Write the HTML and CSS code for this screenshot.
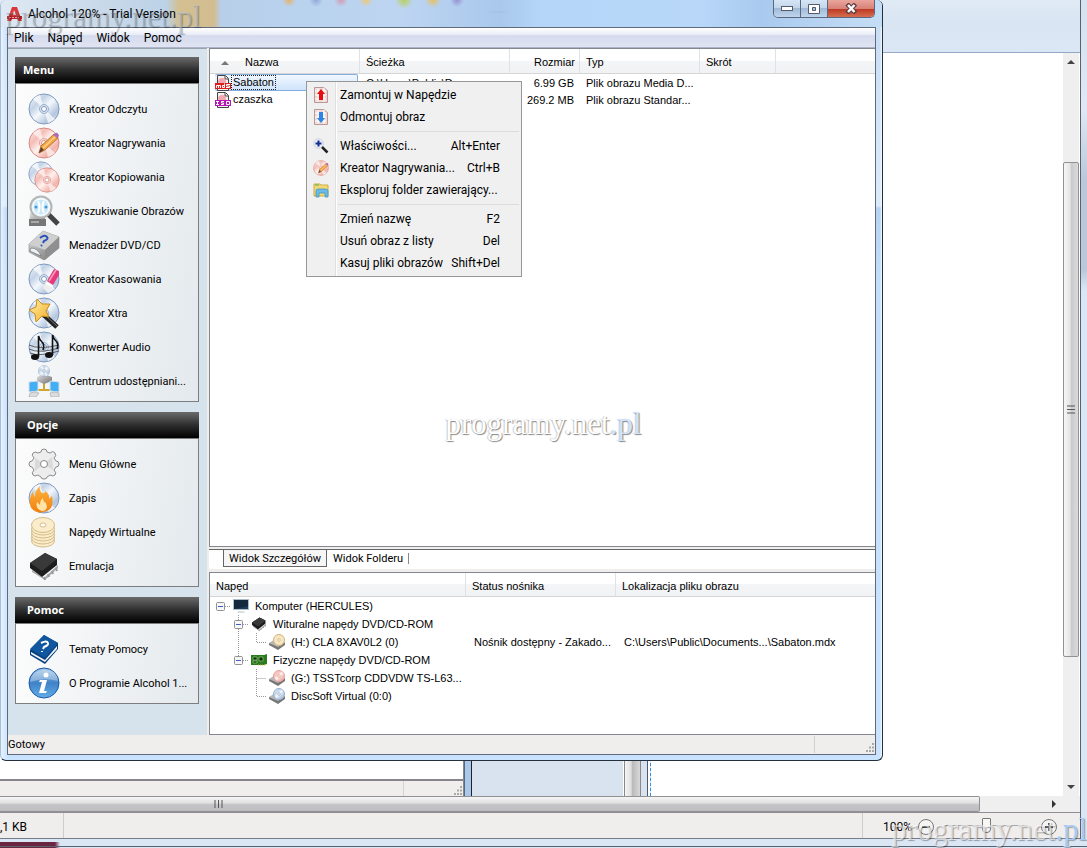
FILE: index.html
```html
<!DOCTYPE html>
<html lang="pl">
<head>
<meta charset="utf-8">
<title>Alcohol 120% - Trial Version</title>
<link rel="stylesheet" href="styles.css">
</head>
<body>
<svg class="defs" aria-hidden="true">
  <defs>
    <linearGradient id="gBlue" x1="0" y1="0" x2="1" y2="1"><stop offset="0" stop-color="#fff"/><stop offset=".3" stop-color="#c3d3e6"/><stop offset=".5" stop-color="#f4f8fc"/><stop offset=".75" stop-color="#b4c7df"/><stop offset="1" stop-color="#eef3f9"/></linearGradient>
    <linearGradient id="gRed" x1="0" y1="0" x2="1" y2="1"><stop offset="0" stop-color="#fff0ee"/><stop offset=".3" stop-color="#f4bdb6"/><stop offset=".5" stop-color="#fff3f1"/><stop offset=".75" stop-color="#f3b3aa"/><stop offset="1" stop-color="#fdeae7"/></linearGradient>
    <linearGradient id="gGrey" x1="0" y1="0" x2="1" y2="1"><stop offset="0" stop-color="#e8e8e8"/><stop offset=".5" stop-color="#a9a9a9"/><stop offset="1" stop-color="#6f6f6f"/></linearGradient>
    <linearGradient id="gFire" x1="0" y1="0" x2="0" y2="1"><stop offset="0" stop-color="#ffb43a"/><stop offset="1" stop-color="#f08010"/></linearGradient>
    <linearGradient id="gStar" x1="0" y1="0" x2="1" y2="1"><stop offset="0" stop-color="#fff2a8"/><stop offset="1" stop-color="#f2ac28"/></linearGradient>
    <linearGradient id="gInfo" x1="0" y1="0" x2="0" y2="1"><stop offset="0" stop-color="#a9c9ea"/><stop offset=".5" stop-color="#3f82c6"/><stop offset="1" stop-color="#62aeea"/></linearGradient>
    <symbol id="disc" viewBox="0 0 32 32"><circle cx="16" cy="16" r="15" fill="url(#gBlue)" stroke="#7f98bd"/><path d="M16 16 5 6a15 15 0 0 1 7-4zM16 16l11 10a15 15 0 0 1-7 4z" fill="#fff" opacity=".7"/><circle cx="16" cy="16" r="4.500" fill="#dce6f2" stroke="#9aafcc"/><circle cx="16" cy="16" r="2.500" fill="#fff" stroke="#7f98bd"/></symbol>
    <symbol id="disc-red" viewBox="0 0 32 32"><circle cx="16" cy="16" r="15" fill="url(#gRed)" stroke="#d88a84"/><path d="M16 16 5 6a15 15 0 0 1 7-4zM16 16l11 10a15 15 0 0 1-7 4z" fill="#fff" opacity=".6"/><circle cx="16" cy="16" r="4.500" fill="#fbe2df" stroke="#e0a09a"/><circle cx="16" cy="16" r="2.500" fill="#fff" stroke="#d88a84"/></symbol>
    <symbol id="burn" viewBox="0 0 32 32"><use href="#disc-red"/><path d="m11 26 2-7L26 7l4 4-13 12z" fill="#f3a445" stroke="#a8651c" stroke-width=".8"/><path d="m15 21 13-12" stroke="#ffd38c" stroke-width="1.500"/><path d="m25 8 2-2q3-1 4 3l-2 2z" fill="#b36bb0"/><path d="m11 26 2-6 3 3z" fill="#5b4032"/></symbol>
    <symbol id="copy" viewBox="0 0 32 32"><use href="#disc" x="0" y="0" width="26" height="26"/><use href="#disc-red" x="6" y="6" width="26" height="26"/></symbol>
    <symbol id="search" viewBox="0 0 32 32"><path d="m2 18 14-1 2 14H1z" fill="url(#gGrey)"/><path d="M1 24h17v7H1z" fill="#777"/><path d="M3 27h8" stroke="#ddd"/><path d="m20 19 10 10" stroke="#444" stroke-width="5"/><circle cx="13" cy="12" r="10.500" fill="#e7f5fd" stroke="#b5b5b5" stroke-width="2"/><circle cx="13" cy="12" r="8" fill="#c7e7fa" stroke="#fff"/><path d="M10 6q3 6 0 12M16 6q-3 6 0 12" fill="none" stroke="#fff" stroke-width="2"/><circle cx="8" cy="12" r="1.500" fill="#4597d4"/><circle cx="18" cy="12" r="1.500" fill="#4597d4"/></symbol>
    <symbol id="drive" viewBox="0 0 32 32"><path d="M1 15 15 2l16 6v11L16 31 1 23z" fill="url(#gGrey)" stroke="#888" stroke-width=".6"/><path d="M1 15 15 2l16 6-14 13z" fill="#cfcfcf"/><path d="M17 21v10l14-12V8z" fill="#8f8f8f"/><path d="M3 19q7 0 10 8L2 22z" fill="#eef2f8" stroke="#666" stroke-width=".6"/><path d="M12 9q5-4 7-1 2 2-3 4l-1 2m-1 2-1 1" fill="none" stroke="#2752b8" stroke-width="2"/></symbol>
    <symbol id="erase" viewBox="0 0 32 32"><use href="#disc"/><path d="m15 25 4-8 7 4-6 9z" fill="#eee"/><path d="m19 18 7-12 5 2v4l-6 10z" fill="#e5397a"/><path d="m21 18 7-11" stroke="#f9a0c0" stroke-width="1.500"/><path d="m18 20 7 4" stroke="#fff" stroke-width="2"/></symbol>
    <symbol id="wand" viewBox="0 0 32 32"><use href="#disc"/><path d="m16 18 13 12" stroke="#222" stroke-width="5"/><path d="m17 18 12 11" stroke="#777"/><path d="m9 2 5 5h8l-4 7 3 6-7-1-6 6-1-8-6-4 7-3z" fill="url(#gStar)" stroke="#c78c1a"/></symbol>
    <symbol id="music" viewBox="0 0 32 32"><use href="#disc"/><path d="M1 14q10 5 30 0M1 18q10 5 30-1M2 22q10 4 29-2" fill="none" stroke="#444" stroke-width=".8"/><ellipse cx="7" cy="26" rx="4" ry="3" fill="#111"/><ellipse cx="21" cy="24" rx="4" ry="3" fill="#111"/><path d="M10.500 26V5q1 4 3.500 6 3 3 1 8M24.500 24V4q1 4 3.500 6 3 3 1 8" fill="none" stroke="#111" stroke-width="1.600"/></symbol>
    <symbol id="network" viewBox="0 0 32 32"><path d="M16 17v8H8m8 0h8" stroke="#d0a630" stroke-width="2" fill="none"/><path d="m9 12 7-3 8 3v4l-8 3-7-3z" fill="url(#gGrey)"/><use href="#disc" x="10" y="0" width="12" height="12"/><path d="m1 17 9-1v10l-9 1zM22 16l9 1v10l-9-1z" fill="#42aef4" stroke="#d7dfe8"/><path d="M2 28q5-2 9 0l-3 4H1zM22 28q5-2 9 0v4h-8z" fill="#dcdcdc" stroke="#999" stroke-width=".5"/></symbol>
    <symbol id="gear" viewBox="0 0 32 32"><path d="M13 4q0-3 3-3t3 3l3 1q3-3 5 0t-1 5l2 3q3 0 3 3t-3 3l-2 3q3 3 1 5t-5 0l-3 2q0 2-3 2t-3-2l-3-2q-3 2-5 0t1-5l-2-3q-3 0-3-3t3-3l2-3Q3 7 5 5t5 0z" fill="#ededed" stroke="#8b8b8b"/><path d="m7 10 9 6-9 7zM24 9l-8 7 9 6z" fill="#d9d9d9"/><circle cx="16" cy="16" r="3.500" fill="#fff" stroke="#888"/></symbol>
    <symbol id="fire" viewBox="0 0 32 32"><use href="#disc"/><path d="M13 31Q0 29 2 17q1-5 3-8 0 4 2 6 0-7 5-11-1 5 2 7 3 2 3-2 5 3 4 8l3-3q3 16-11 16z" fill="url(#gFire)"/><path d="M14 29q-7-2-5-9l3 3q0-5 3-7 0 4 3 5l1 4q-1 4-5 4z" fill="#ffe4a8"/></symbol>
    <symbol id="stack" viewBox="0 0 32 32"><g fill="#fbedcb" stroke="#c9ad74" stroke-width=".8"><ellipse cx="15" cy="25" rx="11.500" ry="6"/><ellipse cx="15" cy="22" rx="11.500" ry="6"/><ellipse cx="15" cy="19" rx="11.500" ry="6"/><ellipse cx="15" cy="16" rx="11.500" ry="6"/><ellipse cx="15" cy="13" rx="11.500" ry="6"/><ellipse cx="15" cy="9" rx="11.500" ry="7.500"/><ellipse cx="15" cy="9" rx="3" ry="2" fill="#fff"/></g></symbol>
    <symbol id="chip" viewBox="0 0 32 32"><path d="m4 20 12 8 14-13v3L17 30 4 22z" fill="#aaa"/><path d="m2 13 15-10 12 6v6L14 27 2 18z" fill="#1d1d1d"/><path d="m2 13 15-10 12 6-15 12z" fill="#393939"/><path d="m16 27 1 3m3-6 1 3m3-6 1 3m3-6 1 3" stroke="#999" stroke-width="2"/></symbol>
    <symbol id="book" viewBox="0 0 32 32"><path d="m2 17 14-15 14 8v6L17 31 2 22z" fill="#063f7d"/><path d="m3 19 14 8 12-14v3L17 29 3 21z" fill="#eef1f5"/><path d="m2 16L16 2l14 8-13 15z" fill="#11579f"/><path d="M13 10q6-3 7 0 1 2-4 4l-1 2m-1 2v1" fill="none" stroke="#fff" stroke-width="2"/></symbol>
    <symbol id="info" viewBox="0 0 32 32"><circle cx="16" cy="16" r="15" fill="url(#gInfo)" stroke="#1b58a6"/><path d="M2 15Q3 4 16 3t14 11q-14-4-28 1z" fill="#fff" opacity=".3"/><circle cx="18" cy="8" r="2.500" fill="#fff"/><path d="M12 13h7l-3 11h3l-1 2h-7l3-11h-3z" fill="#fff"/></symbol>
    <symbol id="app" viewBox="0 0 16 16"><path d="m5 1h5l5 14h-4l-1-3H6l-2 3H0z" fill="#d8383c"/><path d="m7 4 2 5H6z" fill="#fff"/><path d="M0 10h15v3H0z" fill="#b9222a"/><path d="M2 11.500h10" stroke="#f3a0a0" stroke-dasharray="2 1"/></symbol>
    <symbol id="page" viewBox="0 0 16 16"><path d="M2.500.5h8l3 3v12h-11z" fill="#f5f1f1" stroke="#444"/><path d="M10 1v3h3" fill="none" stroke="#444"/><circle cx="7" cy="7" r="4" fill="#f2a8b0"/></symbol>
    <symbol id="mds" viewBox="0 0 16 16"><use href="#page"/><path d="M0 8h16v6H0z" fill="#df1e1e"/><path d="M1.500 13v-2.500h4V13M3.500 11v2M9.500 8.500v4h-2v-2h2M15 9.500h-3.500v1.500h3v1.500H11" fill="none" stroke="#fff"/></symbol>
    <symbol id="iso" viewBox="0 0 16 16"><use href="#page"/><path d="M0 8h16v6H0z" fill="#b615b8"/><path d="M1 9.500h3M2.500 10v3M1 12.500h3M9 9.500H6.500v1.500h2v1.500H6M11.500 9.500h3v3h-3z" fill="none" stroke="#fff"/></symbol>
    <symbol id="mount" viewBox="0 0 16 16"><path d="M1.500.5h9l4 3v12h-13z" fill="#f1d8d5" stroke="#b79a98"/><path d="M2 4h11M2 8h11M2 12h11M5 1v14M11 1v14" stroke="#fff"/><path d="m8 2 4 5h-2v6H6V7H4z" fill="#e60e0e"/></symbol>
    <symbol id="unmount" viewBox="0 0 16 16"><path d="M1.500.5h9l4 3v12h-13z" fill="#f1d8d5" stroke="#b79a98"/><path d="M2 4h11M2 8h11M2 12h11M5 1v14M11 1v14" stroke="#fff"/><path d="m8 14 4-5h-2V3H6v6H4z" fill="#2b84e6"/></symbol>
    <symbol id="zoomin" viewBox="0 0 16 16"><circle cx="5.500" cy="5.500" r="4.800" fill="#e8eefa" stroke="#cdd2da"/><path d="M5.500 2.500v6m-3-3h6" stroke="#15318c" stroke-width="2"/><path d="m9 9 5.500 5.500" stroke="#222" stroke-width="2.500"/></symbol>
    <symbol id="folder" viewBox="0 0 16 16"><path d="M1 2h6l1 1h7v11H1z" fill="#f2d875" stroke="#d0ae45"/><path d="M2 3h4" stroke="#55b45a"/><path d="M3 15V9q0-2 2-2h7q3 0 3 2v6h-3v-4H6v4z" fill="#69bce9" stroke="#368fbe" stroke-width=".7"/></symbol>
    <symbol id="monitor" viewBox="0 0 16 16"><path d="M0 1h16v11H0z" fill="#aebdc8"/><path d="M1 2h14v9H1z" fill="#11283d"/><path d="m1 11 14-3v3z" fill="#1d3c56"/><path d="M5 13h6l1 2H4z" fill="#d8e0e5"/></symbol>
    <symbol id="card" viewBox="0 0 16 16"><path d="M0 3h13l3-1v10l-3 1H0z" fill="#2c7b21"/><path d="M2 5h4v3H2zM2 9h4v2H2zM8 5h4v4H8z" fill="#122c12" stroke="#8fd06f" stroke-width=".7"/><path d="M7 13h8" stroke="#d6b740" stroke-dasharray="1 1"/></symbol>
    <symbol id="odd-gold" viewBox="0 0 16 16"><path d="m0 9 8-5 8 5-7 6z" fill="#b7b7b7"/><path d="m0 9 9 4v3l-9-5zM9 13l7-5v3l-7 5z" fill="#777"/><circle cx="10" cy="6" r="5.500" fill="#f7e6c2" stroke="#d0b47c"/><circle cx="10" cy="6" r="1.300" fill="#fff" stroke="#c4a262" stroke-width=".6"/></symbol>
    <symbol id="odd-red" viewBox="0 0 16 16"><path d="m0 9 8-5 8 5-7 6z" fill="#b7b7b7"/><path d="m0 9 9 4v3l-9-5zM9 13l7-5v3l-7 5z" fill="#777"/><circle cx="10" cy="6" r="5.500" fill="url(#gRed)" stroke="#e4a29a"/><circle cx="10" cy="6" r="1.300" fill="#fff" stroke="#d4857c" stroke-width=".6"/></symbol>
    <symbol id="odd-blue" viewBox="0 0 16 16"><path d="m0 9 8-5 8 5-7 6z" fill="#b7b7b7"/><path d="m0 9 9 4v3l-9-5zM9 13l7-5v3l-7 5z" fill="#777"/><circle cx="10" cy="6" r="5.500" fill="url(#gBlue)" stroke="#93afd2"/><circle cx="10" cy="6" r="1.300" fill="#fff" stroke="#7f98bd" stroke-width=".6"/></symbol>
    <symbol id="box" viewBox="0 0 9 9"><rect x=".5" y=".5" width="8" height="8" rx="1" fill="#f7f7f7" stroke="#919191"/><path d="M2 4.500h5" stroke="#3b5fc4"/></symbol>
  </defs>
</svg>

<div class="desktop">
  <div class="back">
    <div class="ribbon"></div>
    <div class="workspace">
      <div class="canvas">
        <div class="doc"><div class="doc-page"></div><div class="doc-status"><span></span><svg class="grip" viewBox="0 0 10 10"><use href="#gripdots"/></svg></div></div>
        <div class="doc-frame"></div>
        <div class="doc-pane"></div>
        <div class="doc-scroll"></div>
        <div class="doc-edge"></div>
      </div>
      <div class="vscroll">
        <button class="arrow" aria-label="W górę"><svg width="8" height="5"><path d="M0 5 4 1l4 4z" fill="#444"/></svg></button>
        <div class="vthumb"><svg width="8" height="9"><path d="M0 1h8M0 4.500h8M0 8h8" stroke="#555"/></svg></div>
        <button class="arrow" aria-label="W dół"><svg width="8" height="5"><path d="m0 0 4 4 4-4z" fill="#444"/></svg></button>
      </div>
    </div>
    <div class="hscroll">
      <div class="hthumb"><svg width="9" height="8"><path d="M1 0v8M4.500 0v8M8 0v8" stroke="#555"/></svg></div>
      <button class="arrow end" aria-label="W prawo"><svg width="5" height="8"><path d="m0 0 4 4-4 4z" fill="#333"/></svg></button>
    </div>
    <div class="backstatus">
      <div class="size">,1 KB</div>
      <div class="mid"></div>
      <label class="pct" for="zoom">100%</label>
      <button class="round" aria-label="Pomniejsz"><svg width="16" height="16"><circle cx="8" cy="8" r="7.500" fill="#f4f4f4" stroke="#777"/><path d="M4 8h8" stroke="#555" stroke-width="2"/></svg></button>
      <input id="zoom" class="slider" type="range" min="0" max="100" value="50">
      <button class="round" aria-label="Powiększ"><svg width="16" height="16"><circle cx="8" cy="8" r="7.500" fill="#f4f4f4" stroke="#777"/><path d="M4 8h8M8 4v8" stroke="#555" stroke-width="2"/></svg></button>
    </div>
  </div>

  <main class="window">
    <header class="titlebar">
      <svg class="i16"><use href="#app"/></svg>
      <h1>Alcohol 120% - Trial Version</h1>
      <div class="winbtns">
        <button aria-label="Minimalizuj"><svg width="13" height="6"><rect x=".5" y=".5" width="11" height="4" fill="#fff" stroke="#545b6b"/></svg></button>
        <button aria-label="Przywróć"><svg width="13" height="10"><path d="M.5.500h11v9H.5z" fill="#fff" stroke="#545b6b"/><path d="M4.500 3.500h3v3h-3z" fill="#a9c3df" stroke="#545b6b"/></svg></button>
        <button class="close" aria-label="Zamknij"><svg width="13" height="11"><path d="m2 1 8.500 9M10.500 1 2 10" stroke="#5b3b40" stroke-width="4.500"/><path d="m3 2 6.500 7M9.500 2 3 9" stroke="#fff" stroke-width="2.500"/></svg></button>
      </div>
    </header>
    <div class="client">
      <nav class="menubar"><button>Plik</button><button>Napęd</button><button>Widok</button><button>Pomoc</button></nav>
      <div class="content">
        <aside class="sidebar">
          <section class="panel">
            <h2 class="first">Menu</h2>
            <div class="panel-body">
              <button><svg class="i32"><use href="#disc"/></svg>Kreator Odczytu</button>
              <button><svg class="i32"><use href="#burn"/></svg>Kreator Nagrywania</button>
              <button><svg class="i32"><use href="#copy"/></svg>Kreator Kopiowania</button>
              <button><svg class="i32"><use href="#search"/></svg>Wyszukiwanie Obrazów</button>
              <button><svg class="i32"><use href="#drive"/></svg>Menadżer DVD/CD</button>
              <button><svg class="i32"><use href="#erase"/></svg>Kreator Kasowania</button>
              <button><svg class="i32"><use href="#wand"/></svg>Kreator Xtra</button>
              <button><svg class="i32"><use href="#music"/></svg>Konwerter Audio</button>
              <button><svg class="i32"><use href="#network"/></svg>Centrum udostępniani...</button>
            </div>
          </section>
          <section class="panel">
            <h2>Opcje</h2>
            <div class="panel-body">
              <button><svg class="i32"><use href="#gear"/></svg>Menu Główne</button>
              <button><svg class="i32"><use href="#fire"/></svg>Zapis</button>
              <button><svg class="i32"><use href="#stack"/></svg>Napędy Wirtualne</button>
              <button><svg class="i32"><use href="#chip"/></svg>Emulacja</button>
            </div>
          </section>
          <section class="panel">
            <h2>Pomoc</h2>
            <div class="panel-body">
              <button><svg class="i32"><use href="#book"/></svg>Tematy Pomocy</button>
              <button><svg class="i32"><use href="#info"/></svg>O Programie Alcohol 1...</button>
            </div>
          </section>
        </aside>
        <div class="panes">
          <div class="pane list-pane">
            <table class="grid files">
              <colgroup><col class="w150"><col class="w150"><col class="w70"><col class="w120"><col class="w76"><col></colgroup>
              <thead><tr><th><span class="sorted"><svg width="8" height="5"><path d="M0 5 4 1l4 4z" fill="#777"/></svg>Nazwa</span></th><th>Ścieżka</th><th class="num">Rozmiar</th><th>Typ</th><th>Skrót</th><th></th></tr></thead>
              <tbody>
                <tr><td class="namecell"><div class="name sel"><svg class="i16"><use href="#mds"/></svg><span>Sabaton</span></div></td><td>C:\Users\Public\D...</td><td class="num">6.99 GB</td><td>Plik obrazu Media D...</td><td></td><td></td></tr>
                <tr><td class="namecell"><div class="name"><svg class="i16"><use href="#iso"/></svg><span>czaszka</span></div></td><td></td><td class="num">269.2 MB</td><td>Plik obrazu Standar...</td><td></td><td></td></tr>
              </tbody>
            </table>
            <div class="ctx">
              <button><svg class="i16"><use href="#mount"/></svg>Zamontuj w Napędzie</button>
              <button><svg class="i16"><use href="#unmount"/></svg>Odmontuj obraz</button>
              <hr>
              <button><svg class="i16"><use href="#zoomin"/></svg>Właściwości...<kbd>Alt+Enter</kbd></button>
              <button><svg class="i16"><use href="#burn"/></svg>Kreator Nagrywania...<kbd>Ctrl+B</kbd></button>
              <button><svg class="i16"><use href="#folder"/></svg>Eksploruj folder zawierający...</button>
              <hr>
              <button><span class="i16"></span>Zmień nazwę<kbd>F2</kbd></button>
              <button><span class="i16"></span>Usuń obraz z listy<kbd>Del</kbd></button>
              <button><span class="i16"></span>Kasuj pliki obrazów<kbd>Shift+Del</kbd></button>
            </div>
          </div>
          <div class="tabs"><button class="active">Widok Szczegółów</button><button>Widok Folderu</button></div>
          <div class="pane tree-pane">
            <table class="grid tree">
              <colgroup><col class="w256"><col class="w150"><col></colgroup>
              <thead><tr><th>Napęd</th><th>Status nośnika</th><th>Lokalizacja pliku obrazu</th></tr></thead>
              <tbody>
                <tr><td><div class="node"><svg width="18" height="18"><path class="dots" d="M13 9.500h5"/><use href="#box" x="4" y="5" width="9" height="9"/></svg><svg class="i16"><use href="#monitor"/></svg>Komputer (HERCULES)</div></td><td></td><td></td></tr>
                <tr><td><div class="node"><svg width="36" height="18"><path class="dots" d="M26.500 0v18M31 9.500h5"/><use href="#box" x="22" y="5" width="9" height="9"/></svg><svg class="i16"><use href="#chip"/></svg>Wituralne napędy DVD/CD-ROM</div></td><td></td><td></td></tr>
                <tr><td><div class="node"><svg width="54" height="18"><path class="dots" d="M26.500 0v18M44.500 0v9.500H54"/></svg><svg class="i16"><use href="#odd-gold"/></svg>(H:) CLA 8XAV0L2 (0)</div></td><td>Nośnik dostępny - Zakado...</td><td>C:\Users\Public\Documents...\Sabaton.mdx</td></tr>
                <tr><td><div class="node"><svg width="36" height="18"><path class="dots" d="M26.500 0v9M31 9.500h5"/><use href="#box" x="22" y="5" width="9" height="9"/></svg><svg class="i16"><use href="#card"/></svg>Fizyczne napędy DVD/CD-ROM</div></td><td></td><td></td></tr>
                <tr><td><div class="node"><svg width="54" height="18"><path class="dots" d="M44.500 0v18M44.500 9.500H54"/></svg><svg class="i16"><use href="#odd-red"/></svg>(G:) TSSTcorp CDDVDW TS-L63...</div></td><td></td><td></td></tr>
                <tr><td><div class="node"><svg width="54" height="18"><path class="dots" d="M44.500 0v9.500H54"/></svg><svg class="i16"><use href="#odd-blue"/></svg>DiscSoft Virtual (0:0)</div></td><td></td><td></td></tr>
              </tbody>
            </table>
          </div>
        </div>
      </div>
      <footer class="statusbar"><span class="msg">Gotowy</span><span class="cell"><svg class="grip" width="10" height="10"><path id="gripdots" d="M7 1h2M7 4.500h2M4 4.500h2M7 8h2M4 8h2M1 8h2" stroke="#a8a8a8" stroke-width="2"/></svg></span></footer>
    </div>
  </main>

  <div class="mark top">programy.net<span>.pl</span></div>
  <div class="mark center">programy.net<span>.pl</span></div>
  <div class="mark bottom">programy.net<span>.pl</span></div>
</div>
</body>
</html>
```
FILE: styles.css
```css
* { box-sizing: border-box; }
body { margin: 0; font-family: Roboto, sans-serif; font-size: 11px; color: #000; }
button { font: inherit; color: inherit; background: none; border: 0; padding: 0; margin: 0; text-align: left; white-space: nowrap; }
svg { display: block; flex: none; }
.defs { position: absolute; width: 0; height: 0; }
.i16 { width: 16px; height: 16px; flex: none; }
.i32 { width: 32px; height: 32px; }
.desktop { position: relative; height: 100vh; min-height: 600px; overflow: hidden; background: #fff; }

/* window in the background */
.back { height: 100%; display: flex; flex-direction: column; padding: 0 7px 9px 0;
  background: linear-gradient(#59606e, #59606e) 0 calc(100% - 1px) / 100% 1px no-repeat,
    linear-gradient(#59606e, #59606e) calc(100% - 6px) 0 / 1px calc(100% - 9px) no-repeat,
    linear-gradient(90deg, #6b2541 55px, transparent 60px) 0 100% / 100% 6px no-repeat,
    linear-gradient(#d6e2f0, #dfe8f4 110px, #bcc8da 180px, #bcc8da 270px, #dbe6f5 290px); }
.ribbon { flex: none; height: 53px; background: linear-gradient(#e1ebf5, #dae5f4 20px, #dce7f5); border-bottom: 1px solid #94a9c6; }
.workspace { flex: 1; display: flex; min-height: 0; background: #fff; }
.canvas { flex: 1; display: flex; }
.doc { width: 464px; display: flex; flex-direction: column; border-right: 1px solid #888; }
.doc-page { flex: 1; border-bottom: 2px solid #85858b; }
.doc-status { height: 15px; background: #f0eded; display: flex; justify-content: flex-end; align-items: flex-end; }
.doc-status span { width: 60px; height: 15px; border-left: 1px solid #d5d2d2; }
.doc-status .grip { width: 10px; height: 10px; margin-left: -10px; }
.doc-frame { width: 8px; background: #a9c8ec; border-left: 1px solid #5b6a80; border-right: 1px solid #222; }
.doc-pane { width: 152px; background: #d9e2ef; border-right: 1px solid #fff; }
.doc-scroll { width: 17px; background: linear-gradient(90deg, #f5f5f5, #e0e0e0 40%, #bbb 50%, #d8d8d8); border: 1px solid #888; border-width: 0 1px; }
.doc-edge { width: 10px; background: linear-gradient(90deg, #d9e2ef 6px, #4d5868 6px 7px, #fff 7px); margin-right: auto;
  border-right: 1px dashed #2d8ef0; }
.vscroll { width: 16px; background: #efefef; display: flex; flex-direction: column; margin-right: 1px; }
.arrow { height: 17px; display: flex; align-items: center; justify-content: center; }
.vthumb { flex: 0 1 495px; margin-top: 92px; margin-bottom: auto; border: 1px solid #909095; border-radius: 2px;
  background: linear-gradient(90deg, #f6f6f6, #e4e4e6 45%, #c9c9cc 50%, #dcdcde); display: flex; align-items: center; justify-content: center; }
.hscroll { flex: none; height: 16px; background: #efefef; display: flex; align-items: center; }
.hthumb { flex: 1; height: 16px; border: 1px solid #909095; border-left: 0; border-radius: 0 2px 2px 0; margin-right: 64px; padding-left: 214px;
  background: linear-gradient(#f6f6f6, #dedee0 45%, #c6c6c9 50%, #bdbdc1); display: flex; align-items: center; }
.arrow.end { width: 20px; margin-right: 16px; height: 16px; }
.backstatus { flex: none; height: 27px; display: flex; align-items: center; background: #f0eded; border-top: 1px solid #8d8d92; border-bottom: 1px solid #777d88; font-size: 12px; padding-right: 23px; }
.size { width: 64px; height: 25px; line-height: 28px; border-right: 1px solid #cfcccc; }
.mid { flex: 1; height: 25px; border-right: 1px solid #cfcccc; }
.pct { margin: 2px 6px 0 20px; }
.round { margin-top: 3px; }
.slider { appearance: none; width: 84px; height: 18px; margin: 0 13px 0 10px; border: 0; background: linear-gradient(#a9a9a9, #a9a9a9) 0 50% / 100% 1px no-repeat; }
.slider::-webkit-slider-thumb { appearance: none; width: 9px; height: 15px; background: #f6f6f6; border: 1px solid #777; border-radius: 1px 1px 4px 4px; }

/* application window */
.window { position: absolute; inset: 0 204px 87px 0; display: flex; flex-direction: column; padding: 0 6px 5px;
  border: 1px solid #25303f; border-top: 0; border-left-color: #a9bdd5; border-radius: 6px; overflow: hidden;
  background: linear-gradient(90deg, #e6f2ff, transparent 7px, transparent calc(100% - 2px), #f3faff),
    linear-gradient(#c5dcf4, #dcebfa 206px, #b6d2f2 208px, #c3defa 280px, #c9e3ff); }
.titlebar { flex: none; height: 27px; margin: 0 -6px; padding-left: 6px; display: flex; align-items: center;
  background: radial-gradient(circle at 288px 0, #e8b36a, transparent 7px), radial-gradient(circle at 315px 0, #8fa9d8, transparent 7px),
    radial-gradient(circle at 340px 0, #d29ab5, transparent 7px), radial-gradient(circle at 365px 0, #f0c777, transparent 7px),
    radial-gradient(circle at 403px 0, #b9cf5c, transparent 9px), radial-gradient(circle at 432px 0, #e8c25f, transparent 8px),
    radial-gradient(circle at 456px 0, #9a8fd0, transparent 7px),
    radial-gradient(ellipse at 236px 12px, #8faedb, transparent 16px), radial-gradient(ellipse at 497px 12px, #86a5d2, transparent 20px),
    linear-gradient(90deg, #dfe9f4, #c9d9e9 100px, #bcd2e8 165px, #d3bf90 178px, #d2bd91 213px, #b8cfe9 220px, #b9d2ee 300px, #bdd5f1 400px, #a9c8ec 500px, #b5d6f8 540px, #b8d7f9 700px, #a9c9ee 760px, #c5def6 100%); }
.titlebar h1 { margin: 0 0 0 5px; font-weight: 400; font-size: 12px; line-height: 26px; }
.winbtns { margin: 0 7px 0 auto; align-self: flex-start; display: flex; border: 1px solid #59687f; border-top: 0; border-radius: 0 0 5px 5px; overflow: hidden; }
.winbtns button { width: 27px; height: 17px; display: flex; align-items: center; justify-content: center; border-right: 1px solid #59687f; background: linear-gradient(#d6e5f5, #c1d5ea 50%, #a0bad7 50%, #bfd5ec); }
.winbtns .close { width: 46px; border: 0; background: linear-gradient(#e9a69d, #d98278 50%, #bc3721 52%, #d66d50); }
.client { flex: 1; min-height: 0; display: flex; flex-direction: column; border: 1px solid #5f6b7c; background: #f0eded; }
.menubar { flex: none; height: 20px; display: flex; gap: 14px; padding-left: 6px; font-size: 12px; border-bottom: 1px solid #aeb5c8; background: linear-gradient(#fff, #e8ecf6 35%, #d5daed 40%, #e0e4f2); }
.content { flex: 1; min-height: 0; display: flex; gap: 2px; }
.sidebar { width: 199px; flex: none; background: #d6e3ed; border-top: 1px solid #9aa3ae; padding: 8px 8px 0 7px; display: flex; flex-direction: column; gap: 10px; }
.panel h2 { margin: 0; height: 26px; padding-left: 12px; color: #fff; font: 700 11px/26px "Noto Sans", sans-serif; background: linear-gradient(#6a6a6a, #2e2e2e 50%, #000); }
.panel h2.first { padding-left: 8px; }
.panel-body { border: 1px solid #7d7d7d; padding: 8px 0 3px 12px; background: linear-gradient(100deg, #fcfcfc, #e3e9ed); }
.panel-body button { display: flex; align-items: center; gap: 9px; height: 34px; }
.panes { flex: 1; min-width: 0; display: flex; flex-direction: column; }
.pane { background: #fff; border: 1px solid #828790; border-right-width: 0; }
.list-pane { flex: 1; position: relative; min-height: 0; }
.grid { width: 100%; border-collapse: separate; border-spacing: 0; table-layout: fixed; font-family: "Liberation Sans", sans-serif; }
.grid th, .grid td { padding: 0 6px; text-align: left; font-weight: 400; white-space: nowrap; overflow: hidden; }
.grid th { height: 24px; padding-top: 2px; background: linear-gradient(#fff 50%, #f4f5f7 50%, #f1f2f4); border-right: 1px solid #dfe1e4; border-bottom: 1px solid #d5d5d5; }
.grid th:last-child { border-right: 0; }
.grid .num { text-align: right; }
.grid th.num { padding-right: 4px; }
.files thead th { height: 25px; }
.files td { height: 17px; }
.w150 { width: 150px; } .w70 { width: 70px; } .w120 { width: 120px; } .w76 { width: 76px; } .w256 { width: 256px; }
.sorted { display: flex; align-items: center; gap: 16px; padding-left: 5px; }
.grid .namecell { padding: 0 2px 0 5px; }
.name { display: flex; align-items: center; height: 17px; border: 1px solid transparent; border-left: 0; }
.name span { padding: 0 1px; line-height: 13px; border: 1px dotted transparent; }
.name.sel { background: linear-gradient(#f1f7fe, #cfe4fd); border-color: #84acdd; border-radius: 2px; }
.name.sel span { border-color: #222; }
.ctx { position: absolute; left: 96px; top: 32px; width: 216px; padding: 2px 1px; border: 1px solid #979797; font-size: 12px;
  background: linear-gradient(90deg, #f0f0f0 28px, #e0e0e0 28px 29px, #fff 29px 30px, #f0f0f0 30px); }
.ctx button { display: flex; align-items: center; width: 100%; height: 22px; padding: 0 20px 0 5px; }
.ctx .i16 { margin-right: 11px; }
.ctx kbd { font: inherit; margin-left: auto; }
.ctx hr { margin: 3px 1px 3px 30px; height: 1px; border: 0; background: #dcdcdc; }
.tabs { flex: none; height: 20px; margin: 2px 0 3px; background: #fff; border-top: 1px solid #666; display: flex; padding-left: 14px; }
.tabs button { height: 17px; padding: 0 6px; }
.tabs .active { border: 1px solid #666; border-top: 0; padding: 0 5px; background: #f7f6f6; }
.tabs button + button { position: relative; }
.tabs button + button::after { content: ""; position: absolute; right: 0; top: 3px; height: 11px; border-right: 1px solid #888; }
.tree-pane { flex: none; height: 163px; overflow: hidden; }
.tree td { height: 18px; padding: 0 8px; }
.tree td:first-child { padding: 0 0 0 2px; }
.node { display: flex; align-items: center; height: 18px; gap: 6px; }
.node svg:first-child { margin-right: -3px; }
.dots { fill: none; stroke: #999; stroke-dasharray: 1 1; }
.statusbar { flex: none; height: 19px; display: flex; align-items: center; }
.msg { flex: 1; }
.cell { width: 61px; height: 17px; border-left: 1px solid #d2cfcf; display: flex; align-items: flex-end; justify-content: flex-end; }

/* watermarks */
.mark { position: absolute; font: 31px/34px "Liberation Serif", serif; color: #fff; text-shadow: 1px 1px 1px #0007, -1px 0 1px #0003; pointer-events: none; }
.mark span { color: #cfe3fa; }
.mark.top { left: 5px; top: 0; color: #fff2; text-shadow: 1px 1px 1px #0004; }
.mark.top span { color: #b8cbe080; }
.mark.center { left: 50%; top: 50%; transform: translate(-50%, -50%); }
.mark.bottom { right: 0; bottom: 1px; color: #fff9; text-shadow: 1px 1px 1px #0005; }
.mark.bottom span { color: #a9cbf2; }
```
